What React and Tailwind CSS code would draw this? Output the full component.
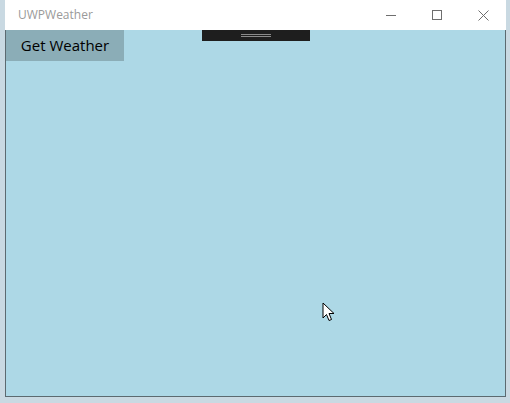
import React from "react";

const App = () => {
  return (
    <div className="w-[510px] h-[403px] bg-[#c9d9e2] overflow-hidden relative" style={{ fontFamily: "'Open Sans', 'Noto Sans', sans-serif" }}>
      <div className="ml-[5px] w-[501px] h-[397px] flex flex-col">
        {/* Title bar */}
        <div className="h-[30px] bg-white flex items-center">
          <span className="ml-[13px] text-[12px] text-[#9a9a9a]">UWPWeather</span>
          <div className="ml-auto flex h-full">
            <div className="w-[46px] h-full flex items-center justify-center">
              <div className="w-[10px] h-px bg-[#6e6e6e]" />
            </div>
            <div className="w-[46px] h-full flex items-center justify-center">
              <div className="w-[10px] h-[10px] border border-[#6e6e6e]" />
            </div>
            <div className="w-[46px] h-full flex items-center justify-center">
              <svg width="11" height="11" viewBox="0 0 11 11">
                <path d="M0.5 0.5 L10.5 10.5 M10.5 0.5 L0.5 10.5" stroke="#6e6e6e" strokeWidth="1" />
              </svg>
            </div>
          </div>
        </div>
        {/* Content */}
        <div className="flex-1 bg-[#add8e6] border-l border-r border-b border-[#5c6a70] relative">
          <button className="w-[118px] h-[31px] bg-[#8badb7] text-[15px] text-black flex items-center justify-center">
            Get Weather
          </button>
          <div className="absolute top-0 left-[196px] w-[108px] h-[11px] bg-[#1e1e1e] flex flex-col items-center justify-center gap-px">
            <div className="w-[30px] h-px bg-[#8a8a8a]" />
            <div className="w-[30px] h-px bg-[#8a8a8a]" />
          </div>
          <svg className="absolute left-[316px] top-[272px]" width="14" height="21" viewBox="0 0 14 21">
            <path d="M1 1 L1 16 L4.5 12.5 L7 18.5 L9.5 17.5 L7 11.5 L12 11.5 Z" fill="white" stroke="black" strokeWidth="1" strokeLinejoin="miter" />
          </svg>
        </div>
      </div>
    </div>
  );
};

export default App;
